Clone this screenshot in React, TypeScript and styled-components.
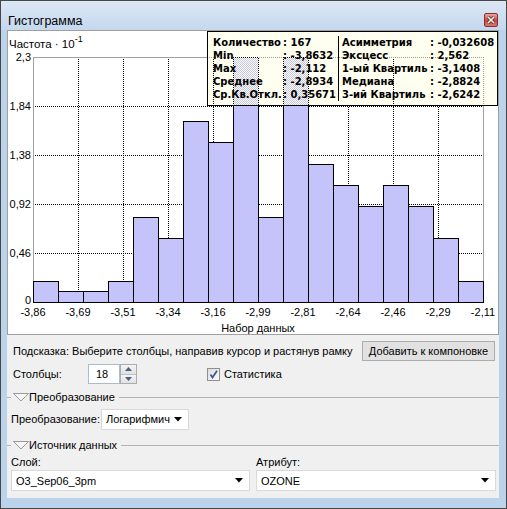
import React from 'react';
import styled, { createGlobalStyle } from 'styled-components';

const GlobalStyle = createGlobalStyle`
  html, body {
    margin: 0;
    padding: 0;
    background: #ffffff;
  }
  body {
    font-family: "Liberation Sans", Arial, sans-serif;
    font-size: 11px;
    color: #000;
  }
  * {
    box-sizing: border-box;
  }
`;

const Window = styled.div`
  width: 507px;
  height: 509px;
  border: 1px solid #474747;
  background: #bcd3ec;
  display: flex;
  flex-direction: column;
`;

const TitleBar = styled.div`
  height: 29px;
  flex: none;
  display: flex;
  align-items: flex-start;
  justify-content: space-between;
  padding: 12px 8px 0 7px;
  background: linear-gradient(#dbe7f5, #c5d8ee);
`;

const Title = styled.div`
  margin-top: 1px;
  line-height: 14px;
  font-size: 12.5px;
`;

const CloseButton = styled.div`
  width: 14px;
  height: 14px;
  border: 1px solid #8a2f2f;
  border-radius: 2px;
  background: linear-gradient(#e9a8a0, #c8463b 55%, #d9786c);
  display: flex;
  align-items: center;
  justify-content: center;
`;

const Frame = styled.div`
  flex: 1;
  display: flex;
  flex-direction: column;
  padding: 0 7px 10px 6px;
`;

const ChartPanel = styled.div`
  position: relative;
  height: 305px;
  flex: none;
  background: #ffffff;
  border: 1px solid #a0a0a0;
`;

const StatsBox = styled.div`
  position: absolute;
  top: 0;
  right: 0;
  width: 291px;
  height: 75px;
  border: 1px solid #000;
  background: repeating-conic-gradient(#ffffe1 0 25%, transparent 0 50%) 0 0 / 2px 2px;
  display: flex;
  align-items: flex-start;
  padding: 4px 0 0 5px;
  font-family: "DejaVu Sans", Verdana, sans-serif;
  font-weight: bold;
  font-size: 10px;
  line-height: 13px;
  white-space: nowrap;
`;

const StatGrid = styled.div<{ $label: number; $value: number }>`
  display: grid;
  grid-template-columns: ${(p) => p.$label}px ${(p) => p.$value}px;
  height: 65px;
`;

const StatDivider = styled.div`
  width: 1px;
  height: 65px;
  background: #000;
  margin: 0 3px;
`;

const Controls = styled.div`
  flex: 1;
  display: flex;
  flex-direction: column;
  background: #f0f0f0;
  padding: 0 3px 0 4px;
  white-space: nowrap;
`;

const HintRow = styled.div`
  margin-top: 6px;
  height: 20px;
  display: flex;
  align-items: center;
  justify-content: space-between;
  padding: 0 1px 0 2px;
`;

const PushButton = styled.div`
  width: 133px;
  height: 20px;
  border: 1px solid #adadad;
  background: #e1e1e1;
  display: flex;
  align-items: center;
  justify-content: center;
`;

const ColumnsRow = styled.div`
  margin-top: 3px;
  height: 20px;
  display: flex;
  align-items: center;
  padding-left: 2px;
`;

const FieldLabel = styled.div<{ $width?: number }>`
  width: ${(p) => (p.$width ? `${p.$width}px` : 'auto')};
  flex: none;
`;

const SpinField = styled.div`
  width: 32px;
  height: 20px;
  background: #fff;
  border: 1px solid #a9bcd4;
  display: flex;
  align-items: center;
  padding-left: 7px;
`;

const SpinButtons = styled.div`
  width: 17px;
  height: 20px;
  display: flex;
  flex-direction: column;
  border: 1px solid #acacac;
  background: #e8e8e8;
`;

const SpinHalf = styled.div<{ $down?: boolean }>`
  flex: 1;
  display: flex;
  align-items: center;
  justify-content: center;
  background: linear-gradient(#f4f4f4, #e1e1e1);
  border-top: ${(p) => (p.$down ? '1px solid #c3c3c3' : 'none')};
`;

const CheckBox = styled.div`
  width: 13px;
  height: 13px;
  margin-left: 70px;
  border: 1px solid #8e8f8f;
  background: linear-gradient(135deg, #dcdcdc, #fbfbfb);
  display: flex;
  align-items: center;
  justify-content: center;
`;

const CheckLabel = styled.div`
  margin-left: 4px;
`;

const GroupHeader = styled.div<{ $top: number }>`
  margin: ${(p) => p.$top}px -3px 0 -4px;
  height: 14px;
  display: flex;
  align-items: center;
  &::before {
    content: '';
    width: 4px;
    height: 1px;
    background: #b4b4b4;
    margin-right: 2px;
  }
  &::after {
    content: '';
    flex: 1;
    height: 1px;
    background: #b4b4b4;
    margin-left: 4px;
  }
`;

const TransformRow = styled.div`
  margin-top: 5px;
  height: 20px;
  display: flex;
  align-items: center;
`;

const Combo = styled.div<{ $width?: number }>`
  width: ${(p) => (p.$width ? `${p.$width}px` : '100%')};
  height: 21px;
  background: #fff;
  border: 1px solid #d9d9d9;
  display: flex;
  align-items: center;
  padding: 0 6px 0 4px;
`;

const ComboText = styled.div`
  flex: 1;
  overflow: hidden;
  white-space: nowrap;
  margin-right: 4px;
`;

const PairRow = styled.div<{ $top: number; $height: number }>`
  margin-top: ${(p) => p.$top}px;
  height: ${(p) => p.$height}px;
  display: grid;
  grid-template-columns: 239px 240px;
  column-gap: 6px;
  align-items: center;
`;

const counts = [2, 1, 1, 2, 8, 6, 17, 15, 23, 8, 23, 13, 11, 9, 11, 9, 6, 2];
const xLabels = ['-3,86', '-3,69', '-3,51', '-3,34', '-3,16', '-2,99', '-2,81', '-2,64', '-2,46', '-2,29', '-2,11'];
const yLabels = ['0', '0,46', '0,92', '1,38', '1,84', '2,3'];

const PX0 = 25;
const PY0 = 26;
const PW = 450;
const PH = 245;
const YMAX = 2.3;
const BIN = PW / counts.length;

const yOf = (v: number) => PY0 + PH - (v / YMAX) * PH;

const leftStats = [
  ['Количество', ': 167'],
  ['Min', ': -3,8632'],
  ['Max', ': -2,112'],
  ['Среднее', ': -2,8934'],
  ['Ср.Кв.Откл.', ': 0,35671'],
];

const rightStats = [
  ['Асимметрия', ': -0,032608'],
  ['Эксцесс', ': 2,562'],
  ['1-ый Квартиль', ': -3,1408'],
  ['Медиана', ': -2,8824'],
  ['3-ий Квартиль', ': -2,6242'],
];

// the bottom tick label sits a little above its line, as in the original
const yLabelBase = (k: number) => (k === 0 ? Math.round(yOf(0)) + 2 : Math.round(yOf(0.46 * k)) + 4);

const Histogram = () => (
  <svg width="490" height="303" style={{ display: 'block' }} fontFamily='"Liberation Sans", Arial, sans-serif'>
    <text x="1" y="17" fontSize="11.5">
      Частота · 10
      <tspan dy="-6" fontSize="9">-1</tspan>
    </text>
    <g shapeRendering="crispEdges" stroke="#000" strokeDasharray="1 1">
      {Array.from({ length: 9 }, (_, k) => {
        const x = PX0 + 45 * (k + 1) + 0.5;
        return <line key={`v${k}`} x1={x} x2={x} y1={PY0} y2={PY0 + PH} />;
      })}
      {[1, 2, 3, 4].map((k) => {
        const y = Math.round(yOf(0.46 * k)) + 0.5;
        return <line key={`h${k}`} x1={PX0} x2={PX0 + PW} y1={y} y2={y} />;
      })}
    </g>
    <rect
      x={PX0 + 0.5}
      y={PY0 + 0.5}
      width={PW}
      height={PH}
      fill="none"
      stroke="#a0a0a0"
      shapeRendering="crispEdges"
    />
    <g shapeRendering="crispEdges" fill="#c4c4fb" stroke="#000">
      {counts.map((c, i) => {
        const top = Math.round(yOf(c / 10));
        return <rect key={i} x={PX0 + BIN * i + 0.5} y={top + 0.5} width={BIN} height={PY0 + PH - top} />;
      })}
    </g>
    <g fontSize="11" textAnchor="end">
      {yLabels.map((l, k) => (
        <text key={l} x="23" y={yLabelBase(k)}>
          {l}
        </text>
      ))}
    </g>
    <g fontSize="11" textAnchor="middle">
      {xLabels.map((l, k) => (
        <text key={l} x={PX0 + 45 * k} y="285">
          {l}
        </text>
      ))}
      <text x={PX0 + PW / 2} y="301">
        Набор данных
      </text>
    </g>
  </svg>
);

const Triangle = () => (
  <svg width="16" height="9" viewBox="0 0 16 9">
    <polygon points="0.5,0.5 15.5,0.5 8,8" fill="#f7f7f7" stroke="#9a9a9a" />
  </svg>
);

const DropArrow = () => (
  <svg width="8" height="5" viewBox="0 0 8 5" style={{ flex: 'none' }}>
    <polygon points="0,0 8,0 4,4.5" fill="#000" />
  </svg>
);

const App = () => (
  <>
    <GlobalStyle />
    <Window>
      <TitleBar>
        <Title>Гистограмма</Title>
        <CloseButton>
          <svg width="8" height="8" viewBox="0 0 8 8">
            <path d="M1 1 L7 7 M7 1 L1 7" stroke="#5a1a1a" strokeWidth="3" />
            <path d="M1 1 L7 7 M7 1 L1 7" stroke="#fff" strokeWidth="1.6" />
          </svg>
        </CloseButton>
      </TitleBar>
      <Frame>
        <ChartPanel>
          <Histogram />
          <StatsBox>
            <StatGrid $label={70} $value={52}>
              {leftStats.map(([k, v]) => (
                <React.Fragment key={k}>
                  <span>{k}</span>
                  <span>{v}</span>
                </React.Fragment>
              ))}
            </StatGrid>
            <StatDivider />
            <StatGrid $label={88} $value={64}>
              {rightStats.map(([k, v]) => (
                <React.Fragment key={k}>
                  <span>{k}</span>
                  <span>{v}</span>
                </React.Fragment>
              ))}
            </StatGrid>
          </StatsBox>
        </ChartPanel>
        <Controls>
          <HintRow>
            <span>Подсказка: Выберите столбцы, направив курсор и растянув рамку</span>
            <PushButton>Добавить к компоновке</PushButton>
          </HintRow>
          <ColumnsRow>
            <FieldLabel $width={75}>Столбцы:</FieldLabel>
            <SpinField>18</SpinField>
            <SpinButtons>
              <SpinHalf>
                <svg width="7" height="4" viewBox="0 0 7 4">
                  <polygon points="0,4 7,4 3.5,0" fill="#4c5e82" />
                </svg>
              </SpinHalf>
              <SpinHalf $down>
                <svg width="7" height="4" viewBox="0 0 7 4">
                  <polygon points="0,0 7,0 3.5,4" fill="#4c5e82" />
                </svg>
              </SpinHalf>
            </SpinButtons>
            <CheckBox>
              <svg width="9" height="9" viewBox="0 0 9 9">
                <path d="M1.5 4.5 L3.5 7.5 L8 0.8" fill="none" stroke="#3d5a96" strokeWidth="1.8" />
              </svg>
            </CheckBox>
            <CheckLabel>Статистика</CheckLabel>
          </ColumnsRow>
          <GroupHeader $top={6}>
            <Triangle />
            <span>Преобразование</span>
          </GroupHeader>
          <TransformRow>
            <FieldLabel $width={90}>Преобразование:</FieldLabel>
            <Combo $width={88}>
              <ComboText>Логарифмическое</ComboText>
              <DropArrow />
            </Combo>
          </TransformRow>
          <GroupHeader $top={9}>
            <Triangle />
            <span>Источник данных</span>
          </GroupHeader>
          <PairRow $top={3} $height={14}>
            <FieldLabel>Слой:</FieldLabel>
            <FieldLabel>Атрибут:</FieldLabel>
          </PairRow>
          <PairRow $top={1} $height={21}>
            <Combo>
              <ComboText>O3_Sep06_3pm</ComboText>
              <DropArrow />
            </Combo>
            <Combo>
              <ComboText>OZONE</ComboText>
              <DropArrow />
            </Combo>
          </PairRow>
        </Controls>
      </Frame>
    </Window>
  </>
);

export default App;
